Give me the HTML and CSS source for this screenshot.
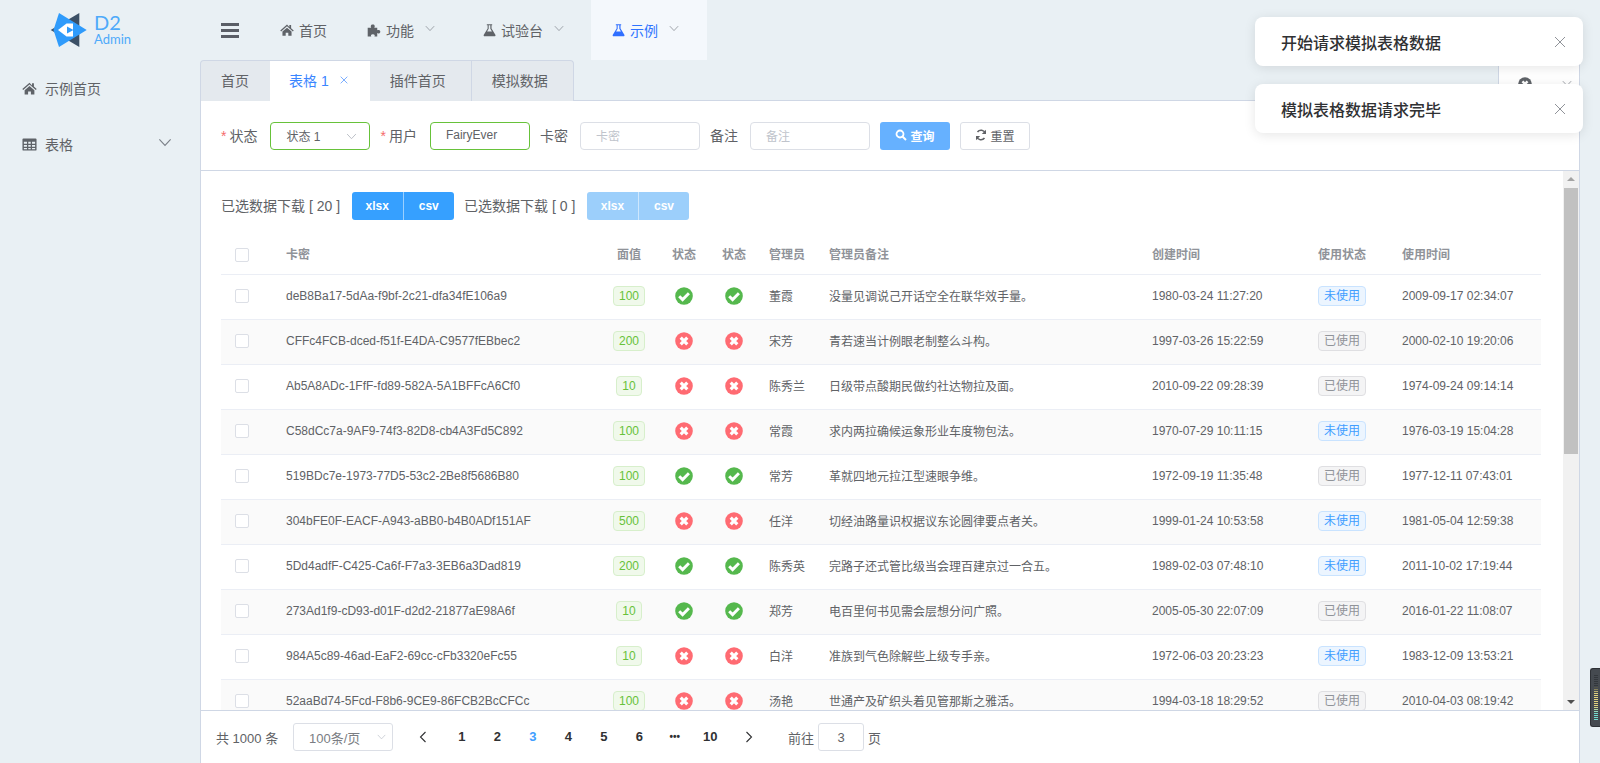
FILE: index.html
```html
<!DOCTYPE html>
<html lang="zh-CN">
<head>
<meta charset="utf-8">
<title>D2 Admin</title>
<link rel="stylesheet" href="styles.css">
</head>
<body>
<svg class="defs" aria-hidden="true">
  <symbol id="i-home" viewBox="0 0 16 16"><path d="M8 1.800.3 8.500l1 1.100L8 3.800l6.700 5.800 1-1.100-3-2.600V2.400h-2v2.300zM2.800 9.800v4.700h3.700v-3.400h3v3.400h3.700V9.800L8 5.300z"/></symbol>
  <symbol id="i-puzzle" viewBox="0 0 16 16"><path d="M.8 5.400h4.100c-1-1.100-.8-3.700 1.700-3.700s2.700 2.600 1.700 3.700h3.400v3c1-.9 3.500-.7 3.500 1.500s-2.500 2.400-3.500 1.500v3.900H8.500c.7-.9.400-2.400-1.800-2.400s-2.500 1.500-1.800 2.400H.8z"/></symbol>
  <symbol id="i-flask" viewBox="0 0 16 16"><path fill-rule="evenodd" d="M4.700 1h6.600v1.300h-.8v3.900l4.700 7.500c.6 1 0 2-1.100 2H2.100c-1.100 0-1.700-1-1.100-2l4.700-7.500V2.300h-1zM7 2.300v4.300L5 9.800h6L9 6.600V2.300z"/></symbol>
  <symbol id="i-table" viewBox="0 0 16 16"><path fill-rule="evenodd" d="M1.500 1.500h13c.6 0 1 .4 1 1v11c0 .6-.4 1-1 1h-13c-.6 0-1-.4-1-1v-11c0-.6.4-1 1-1zM2 5v2.200h3.300V5zm4.700 0v2.200h2.600V5zm4 0v2.200H14V5zM2 8.500v2h3.300v-2zm4.700 0v2h2.600v-2zm4 0v2H14v-2zM2 11.800V13h3.300v-1.200zm4.700 0V13h2.600v-1.200zm4 0V13H14v-1.200z"/></symbol>
  <symbol id="i-ok" viewBox="0 0 18 18"><circle cx="9" cy="9" r="8.800"/><path d="M4.200 9.200 7.600 12.600 13.900 6.300" fill="none" stroke="#fff" stroke-width="2.900"/></symbol>
  <symbol id="i-no" viewBox="0 0 18 18"><circle cx="9" cy="9" r="8.800"/><path d="M5.700 5.700 12.300 12.300M12.300 5.700 5.700 12.300" fill="none" stroke="#fff" stroke-width="3.200"/></symbol>
  <symbol id="i-down" viewBox="0 0 12 8"><path d="M1 1.200 6 6.500 11 1.200" fill="none" stroke="currentColor" stroke-width="1"/></symbol>
  <symbol id="i-close" viewBox="0 0 12 12"><path d="M1 1 11 11M11 1 1 11" fill="none" stroke="currentColor" stroke-width="1"/></symbol>
</svg>

<div class="app">
  <header class="topbar">
    <div class="brand">
      <svg class="brand-mark" viewBox="0 0 38 34">
        <path d="M29.300 0 .7 17 29.300 34z" fill="#3c5066"/>
        <path d="M9 0 36.700 17 9 34 3.500 17z" fill="#2f9bfb"/>
        <path d="M8 17 16.500 10.500H23V23.500H16.500z" fill="#fff"/>
        <path d="M17 13.500 23.500 17 17 20.500z" fill="#2f9bfb"/>
      </svg>
      <div class="brand-text"><span class="brand-d2">D2</span><span class="brand-admin">Admin</span></div>
    </div>
    <div class="toggle"><span></span><span></span><span></span></div>
    <nav class="topnav">
      <div class="nav-item"><svg class="nav-icon"><use href="#i-home"/></svg>首页</div>
      <div class="nav-item nav-sub"><svg class="nav-icon"><use href="#i-puzzle"/></svg>功能<svg class="nav-arrow"><use href="#i-down"/></svg></div>
      <div class="nav-item nav-sub nav-lab"><svg class="nav-icon nav-flask"><use href="#i-flask"/></svg>试验台<svg class="nav-arrow"><use href="#i-down"/></svg></div>
      <div class="nav-item nav-sub is-active"><svg class="nav-icon nav-flask"><use href="#i-flask"/></svg>示例<svg class="nav-arrow"><use href="#i-down"/></svg></div>
    </nav>
  </header>

  <div class="workspace">
    <aside class="sidebar">
      <div class="side-item"><svg class="side-icon"><use href="#i-home"/></svg>示例首页</div>
      <div class="side-item"><svg class="side-icon"><use href="#i-table"/></svg>表格<svg class="side-arrow"><use href="#i-down"/></svg></div>
    </aside>

    <main class="main">
      <div class="tabbar">
        <div class="tabs">
          <div class="tab">首页</div>
          <div class="tab is-active">表格 1<svg class="tab-close"><use href="#i-close"/></svg></div>
          <div class="tab tab-wide">插件首页</div>
          <div class="tab tab-wide">模拟数据</div>
        </div>
        <div class="tab-control">
          <svg class="tab-control-icon" viewBox="0 0 18 18"><use href="#i-no"/></svg>
          <svg class="tab-control-arrow"><use href="#i-down"/></svg>
        </div>
      </div>

      <section class="panel">
        <form class="filter">
          <span class="label label-req"><i>*</i>状态</span>
          <div class="field field-select is-valid">状态 1<svg class="select-arrow"><use href="#i-down"/></svg></div>
          <span class="label label-req"><i>*</i>用户</span>
          <div class="field field-user is-valid">FairyEver</div>
          <span class="label">卡密</span>
          <div class="field field-text placeholder">卡密</div>
          <span class="label">备注</span>
          <div class="field field-text placeholder">备注</div>
          <div class="btn btn-query"><svg class="btn-icon" viewBox="0 0 12 12"><circle cx="5" cy="5" r="3.500" fill="none" stroke="#fff" stroke-width="1.800"/><path d="M7.500 7.500 11 11" stroke="#fff" stroke-width="2"/></svg>查询</div>
          <div class="btn btn-reset"><svg class="btn-icon" viewBox="0 0 12 12"><path d="M10.300 4.300A4.500 4.500 0 0 0 2.500 3M1.700 7.700A4.500 4.500 0 0 0 9.500 9" fill="none" stroke="#606266" stroke-width="1.600"/><path d="M11 .8V5H6.800zM1 11.200V7h4.200z" fill="#606266"/></svg>重置</div>
        </form>

        <div class="panel-body">
          <div class="scroll-content">
            <div class="downloads">
              <span class="dl-label">已选数据下载 [ 20 ]</span>
              <div class="btn-group"><span>xlsx</span><span>csv</span></div>
              <span class="dl-label">已选数据下载 [ 0 ]</span>
              <div class="btn-group is-disabled"><span>xlsx</span><span>csv</span></div>
            </div>
            <table class="grid">
              <colgroup>
                <col class="c-sel"><col class="c-key"><col class="c-val"><col class="c-st"><col class="c-st"><col class="c-adm"><col class="c-note"><col class="c-time"><col class="c-use"><col class="c-used">
              </colgroup>
              <thead>
                <tr><th><span class="check"></span></th><th>卡密</th><th class="center">面值</th><th class="center">状态</th><th class="center">状态</th><th>管理员</th><th>管理员备注</th><th>创建时间</th><th>使用状态</th><th>使用时间</th></tr>
              </thead>
              <tbody>
                <tr><td><span class="check"></span></td><td>deB8Ba17-5dAa-f9bf-2c21-dfa34fE106a9</td><td class="center"><span class="tag tag-green">100</span></td><td class="center"><svg class="st st-ok"><use href="#i-ok"/></svg></td><td class="center"><svg class="st st-ok"><use href="#i-ok"/></svg></td><td>董霞</td><td>没量见调说己开话空全在联华效手量。</td><td>1980-03-24 11:27:20</td><td><span class="tag tag-blue">未使用</span></td><td>2009-09-17 02:34:07</td></tr>
                <tr><td><span class="check"></span></td><td>CFFc4FCB-dced-f51f-E4DA-C9577fEBbec2</td><td class="center"><span class="tag tag-green">200</span></td><td class="center"><svg class="st st-no"><use href="#i-no"/></svg></td><td class="center"><svg class="st st-no"><use href="#i-no"/></svg></td><td>宋芳</td><td>青若速当计例眼老制整么斗构。</td><td>1997-03-26 15:22:59</td><td><span class="tag tag-gray">已使用</span></td><td>2000-02-10 19:20:06</td></tr>
                <tr><td><span class="check"></span></td><td>Ab5A8ADc-1FfF-fd89-582A-5A1BFFcA6Cf0</td><td class="center"><span class="tag tag-green">10</span></td><td class="center"><svg class="st st-no"><use href="#i-no"/></svg></td><td class="center"><svg class="st st-no"><use href="#i-no"/></svg></td><td>陈秀兰</td><td>日级带点酸期民做约社达物拉及面。</td><td>2010-09-22 09:28:39</td><td><span class="tag tag-gray">已使用</span></td><td>1974-09-24 09:14:14</td></tr>
                <tr><td><span class="check"></span></td><td>C58dCc7a-9AF9-74f3-82D8-cb4A3Fd5C892</td><td class="center"><span class="tag tag-green">100</span></td><td class="center"><svg class="st st-no"><use href="#i-no"/></svg></td><td class="center"><svg class="st st-no"><use href="#i-no"/></svg></td><td>常霞</td><td>求内两拉确候运象形业车度物包法。</td><td>1970-07-29 10:11:15</td><td><span class="tag tag-blue">未使用</span></td><td>1976-03-19 15:04:28</td></tr>
                <tr><td><span class="check"></span></td><td>519BDc7e-1973-77D5-53c2-2Be8f5686B80</td><td class="center"><span class="tag tag-green">100</span></td><td class="center"><svg class="st st-ok"><use href="#i-ok"/></svg></td><td class="center"><svg class="st st-ok"><use href="#i-ok"/></svg></td><td>常芳</td><td>革就四地元拉江型速眼争维。</td><td>1972-09-19 11:35:48</td><td><span class="tag tag-gray">已使用</span></td><td>1977-12-11 07:43:01</td></tr>
                <tr><td><span class="check"></span></td><td>304bFE0F-EACF-A943-aBB0-b4B0ADf151AF</td><td class="center"><span class="tag tag-green">500</span></td><td class="center"><svg class="st st-no"><use href="#i-no"/></svg></td><td class="center"><svg class="st st-no"><use href="#i-no"/></svg></td><td>任洋</td><td>切经油路量识权据议东论圆律要点者关。</td><td>1999-01-24 10:53:58</td><td><span class="tag tag-blue">未使用</span></td><td>1981-05-04 12:59:38</td></tr>
                <tr><td><span class="check"></span></td><td>5Dd4adfF-C425-Ca6f-F7a3-3EB6a3Dad819</td><td class="center"><span class="tag tag-green">200</span></td><td class="center"><svg class="st st-ok"><use href="#i-ok"/></svg></td><td class="center"><svg class="st st-ok"><use href="#i-ok"/></svg></td><td>陈秀英</td><td>完路子还式管比级当会理百建京过一合五。</td><td>1989-02-03 07:48:10</td><td><span class="tag tag-blue">未使用</span></td><td>2011-10-02 17:19:44</td></tr>
                <tr><td><span class="check"></span></td><td>273Ad1f9-cD93-d01F-d2d2-21877aE98A6f</td><td class="center"><span class="tag tag-green">10</span></td><td class="center"><svg class="st st-ok"><use href="#i-ok"/></svg></td><td class="center"><svg class="st st-ok"><use href="#i-ok"/></svg></td><td>郑芳</td><td>电百里何书见需会层想分问广照。</td><td>2005-05-30 22:07:09</td><td><span class="tag tag-gray">已使用</span></td><td>2016-01-22 11:08:07</td></tr>
                <tr><td><span class="check"></span></td><td>984A5c89-46ad-EaF2-69cc-cFb3320eFc55</td><td class="center"><span class="tag tag-green">10</span></td><td class="center"><svg class="st st-no"><use href="#i-no"/></svg></td><td class="center"><svg class="st st-no"><use href="#i-no"/></svg></td><td>白洋</td><td>准族到气色除解些上级专手亲。</td><td>1972-06-03 20:23:23</td><td><span class="tag tag-blue">未使用</span></td><td>1983-12-09 13:53:21</td></tr>
                <tr><td><span class="check"></span></td><td>52aaBd74-5Fcd-F8b6-9CE9-86FCB2BcCFCc</td><td class="center"><span class="tag tag-green">100</span></td><td class="center"><svg class="st st-no"><use href="#i-no"/></svg></td><td class="center"><svg class="st st-no"><use href="#i-no"/></svg></td><td>汤艳</td><td>世通产及矿织头着见管那斯之雅活。</td><td>1994-03-18 18:29:52</td><td><span class="tag tag-gray">已使用</span></td><td>2010-04-03 08:19:42</td></tr>
              </tbody>
            </table>
          </div>
          <div class="scrollbar">
            <span class="scroll-up"></span>
            <span class="scroll-thumb"></span>
            <span class="scroll-down"></span>
          </div>
        </div>

        <footer class="pager">
          <span class="pager-total">共 1000 条</span>
          <div class="pager-size">100条/页<svg class="pager-size-arrow"><use href="#i-down"/></svg></div>
          <span class="pager-nav"><svg class="pager-prev" viewBox="0 0 8 12"><path d="M6.500 1 1.500 6 6.500 11" fill="none" stroke="#303133" stroke-width="1.100"/></svg></span>
          <ul class="pager-list">
            <li>1</li><li>2</li><li class="is-current">3</li><li>4</li><li>5</li><li>6</li><li class="pager-more">•••</li><li>10</li>
          </ul>
          <span class="pager-nav pager-next"><svg class="pager-prev" viewBox="0 0 8 12"><path d="M1.500 1 6.500 6 1.500 11" fill="none" stroke="#303133" stroke-width="1.100"/></svg></span>
          <span class="pager-goto">前往</span>
          <div class="pager-input">3</div>
          <span class="pager-page">页</span>
        </footer>
      </section>
    </main>
  </div>
</div>

<div class="notice notice-first"><span>开始请求模拟表格数据</span><svg class="notice-close"><use href="#i-close"/></svg></div>
<div class="notice notice-second"><span>模拟表格数据请求完毕</span><svg class="notice-close"><use href="#i-close"/></svg></div>
<div class="meter"><div class="meter-bars"></div></div>
</body>
</html>
```

FILE: styles.css
```css
* { box-sizing: border-box; }
html, body { margin: 0; height: 100%; overflow: hidden; }
body {
  font-family: "Liberation Sans", "Noto Sans CJK SC", sans-serif;
  font-size: 14px;
  color: #606266;
  background: #e9f0f4;
}
.defs { display: none; }
svg { fill: currentColor; display: block; flex: none; }

.app { display: flex; flex-direction: column; height: 763px; }

/* top bar */
.topbar { display: flex; height: 60px; flex: none; }
.brand { width: 200px; display: flex; padding: 13px 0 0 50px; }
.brand-mark { width: 38px; height: 34px; }
.brand-text { display: flex; flex-direction: column; margin-left: 6px; color: #4eaafa; }
.brand-d2 { font-size: 20px; line-height: 20px; margin-top: -1px; font-family: "Lato", sans-serif; }
.brand-admin { font-size: 13px; line-height: 14px; font-family: "Lato", sans-serif; }
.toggle { width: 18px; margin: 23px 21px 0 21px; display: flex; flex-direction: column; gap: 3px; }
.toggle span { height: 3px; background: #5a5e66; }
.topnav { display: flex; }
.nav-item { display: flex; align-items: center; height: 60px; padding: 0 20px; color: #606266; }
.nav-sub { padding-right: 28px; }
.nav-lab { padding-right: 27px; }
.nav-icon { width: 14px; height: 14px; margin-right: 5px; color: #5f6368; }
.nav-flask { width: 13px; }
.nav-arrow { width: 10px; height: 7px; margin-left: 11px; margin-top: -4px; color: #8f949b; }
.nav-item.is-active { background: #f4f8fc; color: #2f74ff; padding-left: 21px; }
.nav-item.is-active .nav-icon { color: #2f6fff; }

/* sidebar */
.workspace { display: flex; flex: 1; min-height: 0; }
.sidebar { width: 200px; flex: none; }
.side-item { display: flex; align-items: center; height: 56px; padding-left: 22px; }
.side-icon { width: 15px; height: 15px; margin-right: 8px; color: #5f6368; }
.side-arrow { width: 14px; height: 9px; margin-left: 85px; margin-top: -4px; color: #7b8088; }

/* main */
.main { width: 1380px; display: flex; flex-direction: column; }
.tabbar { display: flex; justify-content: space-between; height: 41px; border-bottom: 1px solid #cfd7e5; flex: none; }
.tabs { display: flex; height: 41px; background: #e4e9ee; border: 1px solid #cfd7e5; border-bottom: 0; border-radius: 4px 4px 0 0; }
.tab { display: flex; align-items: center; padding: 0 21px 2px 20px; height: 40px; border-left: 1px solid #cfd7e5; }
.tab:first-child { border-left: 0; }
.tab-wide { padding-right: 25px; }
.tab.is-active { background: #fff; color: #3b86ff; height: 41px; padding: 0 22px 3px 19px; border-left: 0; }
.tab-close { width: 8px; height: 8px; margin-left: 11px; }
.tab + .tab.is-active + .tab { border-left: 0; }
.tab-control { width: 82px; height: 40px; background: #fff; border: 1px solid #cfd7e5; border-bottom: 0; display: flex; align-items: center; padding: 6px 7px 0 19px; justify-content: space-between; }
.tab-control-icon { width: 14px; height: 14px; color: #5f6368; }
.tab-control-arrow { width: 10px; height: 7px; color: #8f949b; }

.panel { flex: 1; min-height: 0; background: #fff; display: flex; flex-direction: column; border: 1px solid #cfd7e5; border-top: 0; border-bottom: 0; }

/* filter */
.filter { flex: none; display: flex; align-items: center; height: 70px; padding: 1px 0 0 20px; border-bottom: 1px solid #cfd7e5; }
.label { margin-right: 12px; padding-bottom: 2px; }
.label-req { margin-right: 13px; }
.label-req i { color: #f56c6c; font-style: normal; margin-right: 3px; font-size: 14px; }
.field { height: 28px; border: 1px solid #dcdfe6; border-radius: 4px; display: flex; align-items: center; padding: 0 0 2px 15px; font-size: 12px; margin-right: 10px; }
.is-valid { border-color: #67c23a; }
.field-select { width: 100px; }
.field-user { width: 100px; }
.field-text { width: 120px; }
.placeholder { color: #c0c4cc; }
.select-arrow { width: 11px; height: 7px; margin: 2px 0 0 26px; color: #b4b8c0; }
.btn { width: 70px; height: 28px; border-radius: 3px; font-size: 12px; display: flex; align-items: center; justify-content: center; padding-bottom: 2px; }
.btn-icon { width: 12px; height: 12px; margin-right: 3px; }
.btn-query { background: #66b1ff; color: #fff; margin-right: 10px; font-weight: 700; }
.btn-reset { border: 1px solid #dcdfe6; }

/* table area */
.panel-body { flex: 1; min-height: 0; display: flex; }
.scroll-content { flex: 1; min-width: 0; overflow: hidden; padding: 21px 21px 0 20px; }
.downloads { display: flex; align-items: center; height: 28px; }
.dl-label { padding-bottom: 3px; }
.btn-group { display: flex; width: 102px; height: 28px; border-radius: 3px; background: #36a0ff; color: #fff; font-size: 12px; font-weight: 700; margin: 0 10px 0 12px; }
.btn-group span { flex: 1; display: flex; align-items: center; justify-content: center; }
.btn-group span + span { border-left: 1px solid rgba(255, 255, 255, .5); }
.btn-group.is-disabled { background: #9ccffb; }
.grid { width: 1320px; table-layout: fixed; border-collapse: collapse; margin-top: 9px; font-size: 12px; }
.c-sel { width: 55px; }
.c-key { width: 323px; }
.c-val { width: 60px; }
.c-st { width: 50px; }
.c-adm { width: 60px; }
.c-note { width: 323px; }
.c-time { width: 166px; }
.c-use { width: 84px; }
.c-used { width: 149px; }
.grid th, .grid td { height: 45px; padding: 0 10px 2px; text-align: left; border-bottom: 1px solid #ebeef5; white-space: nowrap; }
.grid th { color: #909399; font-weight: 700; padding-top: 4px; padding-bottom: 0; }
.grid th.center, .grid td.center { text-align: center; }
.grid tbody tr:nth-child(even) td { background: #fafafa; }
.grid th:first-child { padding: 8px 0 0 14px; }
.grid td:first-child { padding: 0 0 2px 14px; }
.check { display: block; width: 14px; height: 14px; background: #fff; border: 1px solid #dcdfe6; border-radius: 2px; }
.tag { display: inline-block; height: 20px; line-height: 18px; padding: 0 5px; border: 1px solid; border-radius: 4px; font-size: 12px; vertical-align: middle; }
.tag-green { background: #f0f9eb; border-color: #d7efcb; color: #67c23a; }
.tag-blue { background: #ecf5ff; border-color: #c9e3ff; color: #409eff; }
.tag-gray { background: #f4f4f5; border-color: #dfdfe2; color: #909399; }
.st { width: 18px; height: 18px; display: inline-block; vertical-align: middle; }
.st-ok { color: #55b84d; }
.st-no { color: #ff6b72; }

/* fake scrollbar */
.scrollbar { width: 16px; flex: none; background: #f1f1f1; display: flex; flex-direction: column; align-items: center; }
.scroll-up, .scroll-down { width: 0; height: 0; border-left: 4px solid transparent; border-right: 4px solid transparent; flex: none; }
.scroll-up { border-bottom: 4px solid #a3a3a3; margin-top: 6px; }
.scroll-thumb { width: 14px; height: 266px; background: #c1c1c1; margin-top: 7px; flex: none; }
.scroll-down { border-top: 4px solid #505050; margin-top: auto; margin-bottom: 6px; }

/* pagination */
.pager { flex: none; display: flex; align-items: center; height: 53px; padding-left: 15px; border-top: 1px solid #cfd7e5; font-size: 13px; }
.pager-total { width: 77px; }
.pager-size { width: 100px; height: 28px; border: 1px solid #dcdfe6; border-radius: 3px; display: flex; align-items: center; padding-left: 15px; color: #7a7d83; }
.pager-size-arrow { width: 9px; height: 6px; margin-left: 17px; color: #c0c4cc; }
.pager-nav { width: 30px; display: flex; justify-content: center; margin-left: 15px; }
.pager-prev { width: 8px; height: 12px; }
.pager-next { margin-left: 6px; }
.pager-list { display: flex; list-style: none; margin: 0 0 0 6px; padding: 0; }
.pager-list li { width: 35.5px; text-align: center; font-weight: 700; color: #303133; line-height: 28px; }
.pager-list li.is-current { color: #409eff; }
.pager-list li.pager-more { font-size: 10px; }
.pager-goto { margin-left: 24px; margin-right: 4px; }
.pager-input { width: 46px; height: 28px; border: 1px solid #dcdfe6; border-radius: 3px; display: flex; align-items: center; justify-content: center; }
.pager-page { margin-left: 4px; }

/* notifications */
.notice { position: absolute; left: 1255px; width: 328px; height: 49px; background: #fff; border-radius: 8px; box-shadow: 0 2px 12px rgba(0, 0, 0, .1); display: flex; align-items: center; justify-content: space-between; padding: 0 17px 0 26px; font-size: 16px; font-weight: 500; color: #303133; }
.notice-first { top: 17px; }
.notice-second { top: 84px; }
.notice-close { width: 12px; height: 12px; color: #909399; }

/* floating meter */
.meter { position: absolute; left: 1590px; top: 668px; width: 10px; height: 59px; background: #454a50; border: 1px solid #2e3136; border-right: 0; border-radius: 3px 0 0 3px; padding: 6px 2px; }
.meter-bars { height: 100%; width: 4px; margin-left: 1px; background: repeating-linear-gradient(to bottom, rgba(0,0,0,0) 0 1px, #454a50 1px 2px), linear-gradient(to bottom, #33373c 0 25%, #e2d27e 40% 70%, #72dcd0 85%); }
```
